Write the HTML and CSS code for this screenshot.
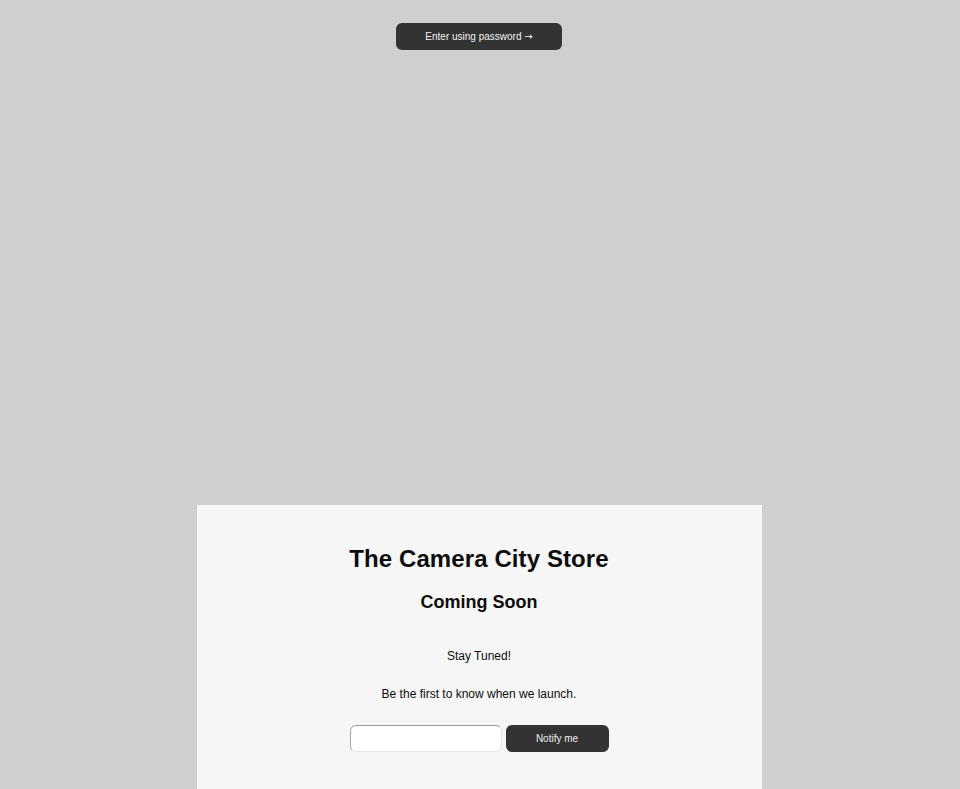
FILE: index.html
```html
<!DOCTYPE html>
<html>
<head>
<meta charset="utf-8">
<link rel="stylesheet" href="styles.css">
</head>
<body>
<div class="page">
  <header class="top">
    <button class="enter">Enter using password <span class="arrow">&rarr;</span></button>
  </header>
  <main class="panel">
    <h1 class="title">The Camera City Store</h1>
    <h2 class="subtitle">Coming Soon</h2>
    <p class="tuned">Stay Tuned!</p>
    <p class="launch">Be the first to know when we launch.</p>
    <form class="signup">
      <input class="email" type="email">
      <button class="notify" type="button">Notify me</button>
    </form>
  </main>
</div>
</body>
</html>
```
FILE: styles.css
```css
html, body {
  margin: 0;
  padding: 0;
  height: 100%;
  background: #cfcfcf;
  font-family: "Liberation Sans", Arial, sans-serif;
  color: #0d0d0d;
  overflow: hidden;
}
.page {
  display: flex;
  flex-direction: column;
  align-items: center;
  min-height: 100%;
  padding-right: 2px;
  box-sizing: border-box;
}
.top {
  padding-top: 23px;
  height: 505px;
  box-sizing: border-box;
}
.enter {
  width: 166px;
  height: 27px;
  background: #333333;
  color: #f2f2f2;
  border: none;
  border-radius: 6px;
  font-family: inherit;
  font-size: 10px;
  padding: 0;
}
.arrow {
  font-family: "DejaVu Sans", sans-serif;
  font-size: 10px;
}
.panel {
  width: 565px;
  flex: 1;
  background: #f6f6f6;
  display: flex;
  flex-direction: column;
  align-items: center;
  padding-top: 39px;
  box-sizing: border-box;
}
.title {
  margin: 0;
  font-size: 24px;
  font-weight: bold;
  line-height: 30px;
  letter-spacing: 0.1px;
}
.subtitle {
  margin: 16px 0 0;
  font-size: 18px;
  font-weight: bold;
  line-height: 24px;
}
.tuned {
  margin: 34px 0 0;
  font-size: 12px;
  line-height: 16px;
}
.launch {
  margin: 22px 0 0;
  font-size: 12px;
  line-height: 16px;
}
.signup {
  display: flex;
  gap: 4px;
  margin-top: 23px;
}
.email {
  width: 152px;
  height: 27px;
  box-sizing: border-box;
  border: 1px solid #e6e6e6;
  border-top: 1.5px solid #9a9a9a;
  border-left: 1.5px solid #a6a6a6;
  border-radius: 6px;
  background: #fff;
  margin: 0;
  padding: 0 6px;
}
.notify {
  width: 103px;
  height: 27px;
  background: #333333;
  color: #eeeeee;
  border: none;
  border-radius: 6px;
  font-family: inherit;
  font-size: 10px;
  padding: 0;
}
```
